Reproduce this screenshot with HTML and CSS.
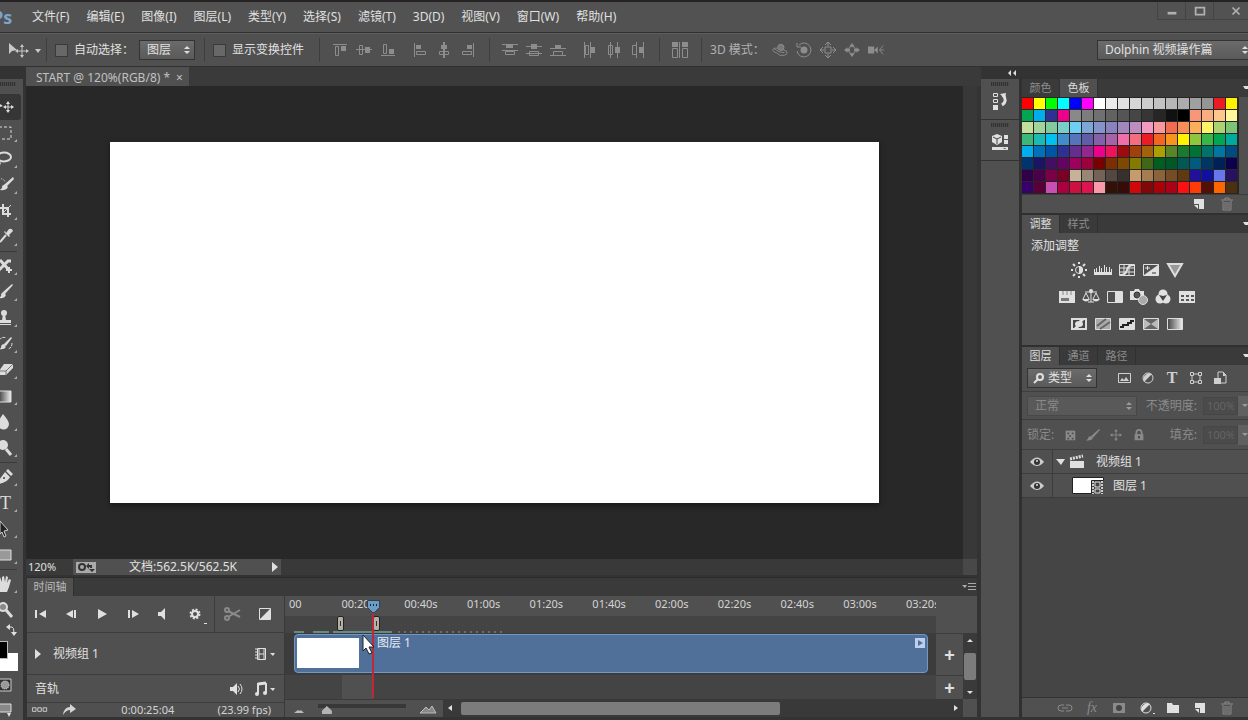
FILE: index.html
```html
<!DOCTYPE html>
<html lang="zh-CN">
<head>
  <meta charset="UTF-8" />
  <meta name="viewport" content="width=device-width, initial-scale=1.0" />
  <title>START @ 120%(RGB/8)</title>
  <link rel="stylesheet" href="styles.css">
</head>
<body>
  <header class="menubar">
    <span class="logo">Ps</span>
    <nav class="menu">
      <button>文件(F)</button>
      <button>编辑(E)</button>
      <button>图像(I)</button>
      <button>图层(L)</button>
      <button>类型(Y)</button>
      <button>选择(S)</button>
      <button>滤镜(T)</button>
      <button>3D(D)</button>
      <button>视图(V)</button>
      <button>窗口(W)</button>
      <button>帮助(H)</button>
    </nav>
    <div class="window-btns">
      <button aria-label="最小化"><svg viewBox="0 0 16 16"><path d="M3 9h10v3H3z"/></svg></button>
      <button aria-label="最大化"><svg viewBox="0 0 16 16"><path d="M3 4h10v8H3z" fill="none" stroke="currentColor" stroke-width="2"/></svg></button>
      <button class="close" aria-label="关闭"><svg viewBox="0 0 16 16"><path d="M4 4l8 8M12 4l-8 8" stroke="currentColor" stroke-width="2"/></svg></button>
    </div>
  </header>

  <div class="options">
    <button class="current-tool" aria-label="移动工具">
      <svg viewBox="0 0 34 16"><path d="M1 1v11l3-3 5-1z"/><path d="M14 4v10M9 9h10" stroke="currentColor"/><path d="M14 2l2 3h-4zM14 16l2-3h-4zM7 9l3-2v4zM21 9l-3-2v4z"/><path d="M27 7h6l-3 4z"/></svg>
    </button>
    <span class="sep"></span>
    <label class="check auto-check"><input type="checkbox">自动选择：</label>
    <div class="dropdown auto-select"><select aria-label="自动选择"><option>图层</option></select></div>
    <span class="sep"></span>
    <label class="check transform-check"><input type="checkbox">显示变换控件</label>
    <span class="sep"></span>
    <div class="icon-set">
      <button aria-label="顶对齐"><svg viewBox="0 0 16 16"><path d="M1 2h14v1H1zM9 4h5v5H9z"/><path d="M3.500 4.500h3v9h-3z" class="line"/></svg></button>
      <button aria-label="垂直居中对齐"><svg viewBox="0 0 16 16"><path d="M0 7h16v1H0zM9 5h5v6H9z"/><path d="M3.500 3.500h3v9h-3z" class="line"/></svg></button>
      <button aria-label="底对齐"><svg viewBox="0 0 16 16"><path d="M1 13h14v1H1zM9 7h5v5H9z"/><path d="M3.500 2.500h3v9h-3z" class="line"/></svg></button>
    </div>
    <div class="icon-set">
      <button aria-label="左对齐"><svg viewBox="0 0 16 16"><path d="M2 1h1v14H2zM4 3h5v4H4z"/><path d="M4.500 9.500h9v3h-9z" class="line"/></svg></button>
      <button aria-label="水平居中对齐"><svg viewBox="0 0 16 16"><path d="M7 0h2v16H7zM5 3h6v4H5z"/><path d="M3.500 9.500h9v3h-9z" class="line"/></svg></button>
      <button aria-label="右对齐"><svg viewBox="0 0 16 16"><path d="M13 1h1v14h-1zM7 3h5v4H7z"/><path d="M2.500 9.500h9v3h-9z" class="line"/></svg></button>
    </div>
    <span class="sep"></span>
    <div class="icon-set">
      <button aria-label="按顶分布"><svg viewBox="0 0 16 16"><path d="M0 2h16v1H0zM4 3h7v3H4zM0 8h16v1H0z"/><path d="M3.500 9.500h9v3h-9z" class="line"/></svg></button>
      <button aria-label="垂直居中分布"><svg viewBox="0 0 16 16"><path d="M0 4h16v1H0zM5 2h6v5H5zM0 11h16v1H0z"/><path d="M3.500 9.500h9v4h-9z" class="line"/></svg></button>
      <button aria-label="按底分布"><svg viewBox="0 0 16 16"><path d="M0 6h16v1H0zM5 3h6v3H5zM0 13h16v1H0z"/><path d="M3.500 9.500h9v4h-9z" class="line"/></svg></button>
    </div>
    <div class="icon-set">
      <button aria-label="按左分布"><svg viewBox="0 0 16 16"><path d="M2 0h1v16H2zM8 0h1v16H8zM9 5h4v6H9z"/><path d="M3.500 3.500h3v9h-3z" class="line"/></svg></button>
      <button aria-label="水平居中分布"><svg viewBox="0 0 16 16"><path d="M4 0h1v16H4zM11 0h1v16h-1zM9 5h5v6H9z"/><path d="M2.500 3.500h4v9h-4z" class="line"/></svg></button>
      <button aria-label="按右分布"><svg viewBox="0 0 16 16"><path d="M6 0h1v16H6zM13 0h1v16h-1zM9 5h4v6H9z"/><path d="M2.500 3.500h4v9h-4z" class="line"/></svg></button>
    </div>
    <span class="sep"></span>
    <div class="icon-set">
      <button aria-label="自动对齐图层"><svg viewBox="0 0 16 16"><path d="M0 0h6v5H0zM10 0h6v5h-6zM7 0h1v16H7z"/><path d="M.500 6.500h5v9h-5zM10.500 6.500h5v9h-5z" class="line"/></svg></button>
    </div>
    <span class="sep"></span>
    <span class="mode-label">3D 模式：</span>
    <div class="icon-set">
      <button aria-label="旋转"><svg viewBox="0 0 18 16"><circle cx="10" cy="5" r="3.500" fill="#777" stroke="currentColor"/><path d="M6 6C0 5-1 10 5 11l4 3h5l3-2-1-3-5-2M2 6l6 4 6 1" class="line"/></svg></button>
      <button aria-label="滚动"><svg viewBox="0 0 16 16"><circle cx="8" cy="8" r="3.500"/><path d="M3 3a7 7 0 1 1-2 6M1 1v4h4" class="line"/></svg></button>
      <button aria-label="拖动"><svg viewBox="0 0 16 16"><path d="M8 1v5M8 10v5M1 8h5M10 8h5M5 3l3-3 3 3M5 13l3 3 3-3M3 5L0 8l3 3M13 5l3 3-3 3M6 4v2H4M10 4v2h2M6 12v-2H4M10 12v-2h2" class="line"/></svg></button>
      <button aria-label="滑动"><svg viewBox="0 0 18 16"><path d="M9 0l3 4H6zM9 16l3-4H6zM0 8l4-3v6zM18 8l-4-3v6z"/><path d="M3 8h12" stroke="currentColor" stroke-width="3"/><circle cx="9" cy="8" r="4" class="line"/><circle cx="9" cy="8" r="2.500" fill="#505050"/></svg></button>
      <button aria-label="缩放"><svg viewBox="0 0 18 16"><path d="M0 4h7v8H0zM7 8l4-4v8z"/><path d="M17 3l-4 5 4 5M13 8h5" class="line"/></svg></button>
    </div>
    <div class="dropdown workspace"><select aria-label="工作区"><option>Dolphin 视频操作篇</option></select></div>
  </div>

  <main class="app">
    <aside class="tools">
      <div class="strip"></div>
      <div class="grip"></div>
      <div class="tool-list">
        <button class="on" aria-label="移动"><svg viewBox="0 0 24 26"><path d="M0 10l3 2-3 1z"/><path d="M8 9v9M4 13h9" stroke="currentColor"/><path d="M8 7l2 3H6zM8 19l2-3H6zM3 13l3-2v4zM14 13l-3-2v4z"/></svg></button>
        <button class="more" aria-label="选框"><svg viewBox="0 0 24 26"><path d="M-1 7h12v12H-1z" class="line" stroke-dasharray="3 2"/></svg></button>
        <button class="more" aria-label="套索"><svg viewBox="0 0 24 26"><ellipse cx="4" cy="11" rx="7" ry="4.500" class="line thick"/><path d="M-1 15q3 2 0 5" class="line"/></svg></button>
        <button class="more" aria-label="快速选择"><svg viewBox="0 0 24 26"><path d="M13 5l1 2-7 7-2-2zM5 12l3 3q-2 4-9 3 4-1 3-4z"/><path d="M-1 8q4-3 6 2" class="line" stroke-dasharray="1 1"/></svg></button>
        <button class="more" aria-label="裁剪"><svg viewBox="0 0 24 26"><path d="M0 10h8v9M3 6v10h8" class="line thick"/><path d="M3 15l8-8" class="line"/></svg></button>
        <button class="more" aria-label="吸管"><svg viewBox="0 0 24 26"><path d="M6 9l3-4q3-1 4 2l-4 4 1 1-1 1-5-5 1-1z"/><path d="M6 11l-6 7" class="line thick"/></svg></button>
        <hr>
        <button class="more" aria-label="修复"><svg viewBox="0 0 24 26"><path d="M-1 17L8 8h3M0 7l9 10" class="line heavy"/><path d="M6 17h6M9 14v6" class="line thick"/></svg></button>
        <button class="more" aria-label="画笔"><svg viewBox="0 0 24 26"><path d="M12 5l1 1-8 9-2-2zM3 13l3 3q-2 4-7 3 3-2 2-4z"/></svg></button>
        <button class="more" aria-label="图章"><svg viewBox="0 0 24 26"><circle cx="4" cy="8" r="3"/><path d="M3 9h2l1 6h5v3H-2v-3h4zM-2 19h13v1H-2z"/></svg></button>
        <button class="more" aria-label="历史记录画笔"><svg viewBox="0 0 24 26"><path d="M11 6l1 1-6 8-3-1zM3 13l3 3q-2 3-7 2 3-1 2-3z"/><path d="M-1 9q4-4 7-2M12 12q0 5-4 6" class="line" stroke-dasharray="3 1"/></svg></button>
        <button class="more" aria-label="橡皮擦"><svg viewBox="0 0 24 26"><path d="M4 7h9v4l-7 7h-7v-4z"/><path d="M-1 14h7l7-7M6 14v4" stroke="#777" fill="none"/></svg></button>
        <button class="more" aria-label="渐变"><svg viewBox="0 0 24 26"><defs><linearGradient id="g1"><stop stop-color="#444"/><stop offset="1" stop-color="#eee"/></linearGradient></defs><path d="M-1 8h12v11H-1z" fill="url(#g1)" stroke="#ddd"/></svg></button>
        <button class="more" aria-label="模糊"><svg viewBox="0 0 24 26"><path d="M3 5q6 7 6 10a5 5 0 0 1-11 0q0-3 5-10"/></svg></button>
        <button class="more" aria-label="减淡"><svg viewBox="0 0 24 26"><circle cx="3" cy="10" r="5"/><path d="M6 14l5 6" class="line heavy"/></svg></button>
        <hr>
        <button class="more" aria-label="钢笔"><svg viewBox="0 0 24 26"><path d="M8 5l5 5-2 2-5-5zM5 8l5 5q-2 5-11 7v-4z"/><circle cx="4" cy="14" r="1" fill="#444"/></svg></button>
        <button class="more letter" aria-label="文字">T</button>
        <button class="more" aria-label="路径选择"><svg viewBox="0 0 24 26"><path d="M0 5l8 9-4 1 2 5-2 1-2-5-2 2z" fill="#222" stroke="#ccc"/></svg></button>
        <button class="more" aria-label="矩形"><svg viewBox="0 0 24 26"><path d="M-1 8h12v10H-1z" fill="#999" stroke="#ddd"/></svg></button>
        <hr>
        <button class="more" aria-label="抓手"><svg viewBox="0 0 24 26"><path d="M-1 13V7l1-1 2 5V6l2-1 1 6 1-6 2 1-1 6 2-4 2 1-2 7-2 5H0l-2-4z"/></svg></button>
        <button aria-label="缩放"><svg viewBox="0 0 24 26"><circle cx="3" cy="10" r="4" fill="#888" stroke="#ddd" stroke-width="2"/><path d="M6 13l6 7" class="line heavy"/></svg></button>
      </div>
      <button class="swap" aria-label="切换颜色"><svg viewBox="0 0 24 14"><path d="M9 4h3q2 0 2 6" class="line"/><path d="M10 1v6L6 4zM11 9h6l-3 4z"/></svg></button>
      <div class="fgbg"><span class="bg"></span><span class="fg"></span></div>
      <button class="mask" aria-label="快速蒙版"><svg viewBox="0 0 24 16"><path d="M-1 2h12v12H-1z" fill="#333" stroke="#ccc"/><circle cx="5" cy="8" r="4" fill="#999" stroke="#ddd" stroke-dasharray="1 1"/></svg></button>
      <button class="mask" aria-label="屏幕模式"><svg viewBox="0 0 24 16"><path d="M-1 3h12v8H-1z" fill="#888" stroke="#ddd"/><path d="M7 12h4l-2 4z"/></svg></button>
    </aside>

    <section class="center">
      <div class="doc-tabs"><div class="doc-tab">START @ 120%(RGB/8) *<button aria-label="关闭">×</button></div></div>
      <div class="stage">
        <div class="pasteboard"><div class="artboard"></div></div>
        <div class="stage-scroll"></div>
      </div>
      <div class="status">
        <input class="zoom-field" value="120%" aria-label="缩放比例">
        <div class="status-info">
          <svg class="bridge" viewBox="0 0 20 12"><path d="M0 1h20v11H0z" fill="#aaa"/><g fill="none" stroke="#333" stroke-width="2"><circle cx="6" cy="6" r="3"/></g><path d="M10 5l3-3v2h3v3h-2V6h-1v2zM19 8l-3 3-3-3z" fill="#333"/></svg>
          <span>文档:562.5K/562.5K</span>
          <button aria-label="更多"><svg viewBox="0 0 10 12"><path d="M2 1l6 5-6 5z"/></svg></button>
        </div>
        <div class="status-scroll"></div>
        <div class="status-corner"></div>
      </div>

      <div class="timeline">
        <div class="tabs"><button class="tab on wide">时间轴</button><button class="panel-menu" aria-label="面板菜单"><svg viewBox="0 0 14 10"><path d="M0 3h5L3 6z"/><path d="M6 1.500h8M6 4.500h8M6 7.500h8" stroke="currentColor"/></svg></button></div>
        <div class="tl-body">
          <div class="tl-left">
            <div class="tl-controls">
              <button aria-label="转到第一帧"><svg viewBox="0 0 16 16"><path d="M2 4h2v8H2zM13 4v8L6 8z"/></svg></button>
              <button aria-label="上一帧"><svg viewBox="0 0 16 16"><path d="M9 4v8L2 8zM10 4h2v8h-2z"/></svg></button>
              <button aria-label="播放"><svg viewBox="0 0 16 16"><path d="M3 3v10l9-5z"/></svg></button>
              <button aria-label="下一帧"><svg viewBox="0 0 16 16"><path d="M2 4h2v8H2zM6 4v8l7-4z"/></svg></button>
              <button aria-label="静音"><svg viewBox="0 0 16 16"><path d="M1 6h3l4-4v12l-4-4H1z"/></svg></button>
              <button class="gear" aria-label="设置"><svg viewBox="0 0 16 20"><circle cx="7" cy="10" r="3" fill="none" stroke="currentColor" stroke-width="2"/><circle cx="7" cy="10" r="4.500" fill="none" stroke="currentColor" stroke-width="2" stroke-dasharray="2 1.530"/><path d="M16 19h3v1h-3z"/></svg></button>
              <div class="cut">
                <button class="off" aria-label="拆分"><svg viewBox="0 0 16 16"><path d="M4 5l12 6M4 11l12-7" stroke="currentColor" stroke-width="2"/><circle cx="3" cy="4" r="2" class="line thick"/><circle cx="3" cy="12" r="2" class="line thick"/></svg></button>
                <button aria-label="过渡"><svg viewBox="0 0 16 16"><path d="M2.500 2.500h11v11h-11z" class="line"/><path d="M13 3v10H3z"/></svg></button>
              </div>
            </div>
            <div class="tl-track">
              <svg class="tri" viewBox="0 0 8 10"><path d="M0 0l6 5-6 5z"/></svg>
              <span>视频组 1</span>
              <button aria-label="视频选项"><svg class="drop" viewBox="0 0 22 16"><path d="M3.500 2.500h8v11h-8z" class="line"/><path d="M5 2v12M10 2v12M5 8h5" class="line"/><path d="M1 3h2M1 6h2M1 9h2M1 12h2" class="line"/><path d="M16 7h5l-2 3z"/></svg></button>
            </div>
            <div class="tl-audio">
              <span>音轨</span>
              <button aria-label="静音音轨"><svg viewBox="0 0 16 16"><path d="M1 6h3l4-4v12l-4-4H1z"/><path d="M9 5q3 3 0 6M11 3q4 5 0 10" class="line"/></svg></button>
              <button aria-label="音轨选项"><svg class="drop" viewBox="0 0 22 16"><path d="M4 3l8-1" class="line heavy"/><path d="M4 2v11M12 2v10" class="line thick"/><circle cx="3" cy="13" r="2"/><circle cx="11" cy="12" r="2"/><path d="M16 7h5l-2 3z"/></svg></button>
            </div>
            <div class="tl-foot">
              <button aria-label="转换为帧动画"><svg viewBox="0 0 18 14"><path d="M.500 4.500h4v4h-4zM6.500 4.500h4v4h-4zM12.500 4.500h4v4h-4z" class="line"/></svg></button>
              <button aria-label="渲染视频"><svg viewBox="0 0 16 14"><path d="M1 12q1-8 7-8V1l6 5-6 4V7q-4 0-7 5"/></svg></button>
              <span class="time">0:00:25:04</span>
              <span>(23.99 fps)</span>
            </div>
          </div>

          <div class="tl-right">
            <div class="tl-main">
              <div class="tl-graph">
                <div class="ruler">
                  <span>00</span><span>00:20s</span><span>00:40s</span><span>01:00s</span><span>01:20s</span><span>01:40s</span><span>02:00s</span><span>02:20s</span><span>02:40s</span><span>03:00s</span><span>03:20s</span>
                </div>
                <div class="work-area"><div class="range"><i></i><i></i></div></div>
                <div class="clip-row">
                  <div class="clip"><div class="thumb"></div><span>图层 1</span><button aria-label="动感"><svg viewBox="0 0 10 10"><path d="M0 0h10v10H0z"/><path d="M3 2l5 3-5 3z" fill="#507099"/></svg></button></div>
                </div>
                <div class="audio-row"><div></div></div>
                <div class="playhead"><svg viewBox="0 0 13 13"><path d="M.500.500h12v7l-5 5h-2l-5-5z" fill="#6c9bc5" stroke="#2b4055"/><path d="M3 5h1M6 5h1M9 5h1" stroke="#16293b" stroke-width="2"/></svg></div>
                <svg class="cursor" viewBox="0 0 13 21"><path d="M1 1v16l3-3 3 6 3-1-3-6h5z" fill="#fff" stroke="#222"/></svg>
              </div>
              <div class="tl-add"><div></div><button aria-label="添加媒体">+</button><button class="short" aria-label="添加音频">+</button></div>
              <div class="tl-scroll">
                <div class="vscroll">
                  <svg viewBox="0 0 10 6"><path d="M2 4l3-3 3 3z"/></svg>
                  <div></div>
                  <svg viewBox="0 0 10 6"><path d="M2 2l3 3 3-3z"/></svg>
                </div>
              </div>
            </div>
            <div class="tl-zoom">
              <div class="zoomer">
                <svg viewBox="0 0 12 10"><path d="M1 9l4-3 2 1 1-1 3 3z"/></svg>
                <input type="range" min="0" max="100" value="5" aria-label="时间轴缩放">
                <svg class="big" viewBox="0 0 18 10"><path d="M1 9l6-6 3 3 3-4 4 7z" fill="#888" stroke="#bbb"/></svg>
              </div>
              <div class="hscroll">
                <svg viewBox="0 0 6 8"><path d="M5 1v6L1 4z"/></svg>
                <div><div class="hthumb"></div></div>
                <svg viewBox="0 0 6 8"><path d="M1 1v6l4-3z"/></svg>
              </div>
              <div class="corner"></div>
            </div>
          </div>
        </div>
      </div>
    </section>

    <aside class="side">
      <div class="strip"><svg viewBox="0 0 8 6"><path d="M3 0v6L0 3zM8 0v6L5 3z"/></svg></div>
      <div class="side-body">
        <div class="dock">
          <div class="dock-item"><div class="grip"></div><button aria-label="历史记录"><svg viewBox="0 0 18 20"><path d="M2.500 2.500h4v3h-4zM2.500 8.500h4v3h-4z" class="line"/><path d="M2 14h5v5H2z"/><path d="M9 3l6-1-1 6z"/><path d="M12 4q5 6-1 10" class="line heavy"/></svg></button></div>
          <div class="dock-item"><div class="grip"></div><button aria-label="属性"><svg viewBox="0 0 18 20"><path d="M6 2l5 2v6l-5 3-5-3V4zM13 3h4v4h-4zM13 8h4v4h-4zM1 15h16v3H1z"/><path d="M2 5l4 2 4-2M6 7v5" stroke="#444" fill="none"/><path d="M12 16h3l-1 1z" fill="#333"/></svg></button></div>
        </div>
        <div class="panels">
          <section>
            <div class="tabs"><button class="tab">颜色</button><button class="tab on">色板</button><button class="panel-menu" aria-label="面板菜单"><svg viewBox="0 0 14 10"><path d="M9 3h5v3h-3z"/></svg></button></div>
            <div class="swatch-wrap"><div class="swatches"></div></div>
            <div class="swatch-foot">
              <button aria-label="新建色板"><svg viewBox="0 0 16 16"><path d="M3 3h10v10H8V8H3zM3 9h4v4z"/></svg></button>
              <button class="off" aria-label="删除色板"><svg viewBox="0 0 16 16"><path d="M2 4h12M6 4V2h4v2M4 5v9h8V5M6 6v7M8 6v7M10 6v7" class="line"/></svg></button>
            </div>
          </section>

          <section>
            <div class="tabs"><button class="tab on">调整</button><button class="tab">样式</button><button class="panel-menu" aria-label="面板菜单"><svg viewBox="0 0 14 10"><path d="M9 3h5v3h-3z"/></svg></button></div>
            <div class="adjust">
              <p>添加调整</p>
              <div class="adjust-row">
                <button aria-label="亮度/对比度"><svg viewBox="0 0 18 18"><circle cx="9" cy="9" r="3.500" class="line"/><path d="M9 5a4 4 0 0 1 0 8z"/><path d="M9 1v2M9 15v2M1 9h2M15 9h2M3 3l2 2M13 13l2 2M15 3l-2 2M3 15l2-2" class="line thick"/></svg></button>
                <button aria-label="色阶"><svg viewBox="0 0 18 18"><path d="M0 14V8h1v3h1V7h1v4h2V5h1v6h1V7h1v4h2V4h1v7h1V6h1v5h2V6h1v5h1V8h1v6z"/></svg></button>
                <button aria-label="曲线"><svg viewBox="0 0 18 18"><path d="M1.500 3.500h15v11h-15zM2 7h14M2 11h14M6 4v10M11 4v10" class="line"/><path d="M2 14q6 0 7-5t7-5" class="line thick"/></svg></button>
                <button aria-label="曝光度"><svg viewBox="0 0 18 18"><path d="M1.500 3.500h15v11h-15z" class="line"/><path d="M16 4v10H2z"/><path d="M3 7h5M5.500 5v4" class="line"/><path d="M10 12h4" stroke="#333"/></svg></button>
                <button aria-label="自然饱和度"><svg viewBox="0 0 18 18"><path d="M2 3h14L9 15z" fill="#999" stroke="#ddd" stroke-width="2"/></svg></button>
              </div>
              <div class="adjust-row">
                <button aria-label="色相/饱和度"><svg viewBox="0 0 18 18"><path d="M1 3h16v12H1z"/><path d="M5 3v4M9 3v4M13 3v4" stroke="#888"/><path d="M3 10h8v3H3z" fill="#777"/></svg></button>
                <button aria-label="色彩平衡"><svg viewBox="0 0 18 18"><path d="M9 2v12M3 4h12M6 14h6M4 5l-3 6M4 5l3 6M14 5l-3 6M14 5l3 6" class="line"/><path d="M0 11h8q-4 5-8 0M10 11h8q-4 5-8 0"/><circle cx="9" cy="3" r="2"/></svg></button>
                <button aria-label="黑白"><svg viewBox="0 0 18 18"><path d="M1.500 3.500h15v11h-15z" class="line"/><path d="M9 4h7v10H9z"/></svg></button>
                <button aria-label="照片滤镜"><svg viewBox="0 0 18 18"><path d="M0 3h4l1-2h4l1 2h4v9H0z"/><circle cx="7" cy="7" r="3" fill="#555" stroke="#333"/><circle cx="13" cy="12" r="4.500" fill="#aaa" stroke="#ddd"/></svg></button>
                <button aria-label="通道混合器"><svg viewBox="0 0 18 18"><circle cx="9" cy="6" r="4.500"/><circle cx="6" cy="11" r="4.500"/><circle cx="12" cy="11" r="4.500"/><path d="M5 7l4 1 4-1-4 6z" fill="#444"/></svg></button>
                <button aria-label="颜色查找"><svg viewBox="0 0 18 18"><path d="M1 3h16v12H1z"/><path d="M3 7h3v2H3zM8 7h3v2H8zM13 7h3v2h-3zM8 11h3v2H8zM13 11h3v2h-3zM3 11h3v2H3z" fill="#555"/></svg></button>
              </div>
              <div class="adjust-row">
                <button aria-label="反相"><svg viewBox="0 0 18 18"><path d="M2 4h14v10H2z" fill="#444" stroke="#ddd" stroke-width="2"/><ellipse cx="9" cy="9" rx="4" ry="3"/><path d="M3 14l4-4 2 3zM15 4l-4 4-2-3z"/></svg></button>
                <button aria-label="色调分离"><svg viewBox="0 0 18 18"><path d="M1.500 3.500h15v11h-15z" fill="#aaa" stroke="#ddd"/><path d="M3 11L12 4M6 14l10-7" stroke="#666" stroke-width="2" fill="none"/></svg></button>
                <button aria-label="阈值"><svg viewBox="0 0 18 18"><path d="M1.500 3.500h15v11h-15z" fill="#ddd" stroke="#ddd"/><path d="M2 12h3v-2h5V8h3V6h3" stroke="#222" stroke-width="2" fill="none"/></svg></button>
                <button aria-label="可选颜色"><svg viewBox="0 0 18 18"><path d="M1.500 3.500h15v11h-15z" fill="#666" stroke="#ddd"/><path d="M2 4l7 5-7 5zM16 4L9 9l7 5z" fill="#bbb"/></svg></button>
                <button aria-label="渐变映射"><svg viewBox="0 0 18 18"><path d="M1.500 3.500h15v11h-15z" fill="url(#g1)" stroke="#ddd"/></svg></button>
              </div>
            </div>
          </section>

          <section class="layers">
            <div class="tabs"><button class="tab on">图层</button><button class="tab">通道</button><button class="tab">路径</button><button class="panel-menu" aria-label="面板菜单"><svg viewBox="0 0 14 10"><path d="M9 3h5v3h-3z"/></svg></button></div>
            <div class="row filter-row">
              <div class="dropdown filter"><svg viewBox="0 0 12 12"><circle cx="7" cy="5" r="3" class="line thick"/><path d="M5 7l-4 4" class="line thick"/></svg><select aria-label="图层过滤"><option>类型</option></select></div>
              <div class="icon-set filters">
                <button aria-label="像素"><svg viewBox="0 0 16 16"><path d="M2.500 3.500h12v9h-12z" class="line"/><path d="M4 11l2-3 2 2 2-3 3 4z"/></svg></button>
                <button aria-label="调整"><svg viewBox="0 0 16 16"><circle cx="8" cy="8" r="5" class="line"/><path d="M12 4A6 6 0 0 0 4 12z"/></svg></button>
                <button class="letter" aria-label="文字">T</button>
                <button aria-label="形状"><svg viewBox="0 0 16 16"><path d="M4 4h8v8H4z" class="line"/><path d="M2.500 2.500h3v3h-3zM10.500 2.500h3v3h-3zM2.500 10.500h3v3h-3zM10.500 10.500h3v3h-3z" fill="#505050" stroke="currentColor"/></svg></button>
                <button aria-label="智能对象"><svg viewBox="0 0 16 16"><path d="M6 8V2h5l3 3v8H9" class="line"/><path d="M2 8h7v6H2zM11 2v4h3z"/></svg></button>
              </div>
            </div>
            <div class="row faded">
              <div class="dropdown blend"><select aria-label="混合模式"><option>正常</option></select></div>
              <label for="opacity">不透明度:</label>
              <input id="opacity" value="100%"><button class="stepper" aria-label="不透明度滑块"></button>
            </div>
            <div class="row faded lock-row">
              <span>锁定:</span>
              <button aria-label="锁定透明像素"><svg viewBox="0 0 16 16"><path d="M3 3h11v11H3z"/><path d="M5 5h2v2H5zM10 5h2v2h-2zM7 8h2v2H7zM5 11h2v2H5zM10 11h2v2h-2z" fill="#505050"/></svg></button>
              <button aria-label="锁定图像像素"><svg viewBox="0 0 16 16"><path d="M15 1l1 1-8 9-2-2zM6 9l2 3q-3 3-8 2 3-1 3-4z"/></svg></button>
              <button aria-label="锁定位置"><svg viewBox="0 0 16 16"><path d="M8 3v10M3 8h10" class="line"/><path d="M8 1l2 3H6zM8 15l2-3H6zM1 8l3-2v4zM15 8l-3-2v4z"/></svg></button>
              <button aria-label="锁定全部"><svg viewBox="0 0 16 16"><path d="M3 7h10v7H3z"/><path d="M5 7V5q0-3 3-3t3 3v2" class="line thick"/><path d="M8 9v3" stroke="#444" stroke-width="2"/></svg></button>
              <label for="fill">填充:</label>
              <input id="fill" value="100%"><button class="stepper" aria-label="填充滑块"></button>
            </div>
            <ul class="layer-list">
              <li>
                <button class="eye" aria-label="可见性"><svg viewBox="0 0 14 10"><path d="M0 5q7-9 14 0-7 8-14 0z" fill="#ccc"/><circle cx="7" cy="5" r="3" fill="#333"/><circle cx="7" cy="4" r="1"/></svg></button>
                <svg class="tri-down" viewBox="0 0 10 10"><path d="M0 2h9L5 8z"/></svg>
                <svg class="group" viewBox="0 0 16 16"><path d="M1 7h14v7H1z"/><path d="M1 5l13-3" stroke="#ddd" stroke-width="3" stroke-dasharray="2 1"/></svg>
                <span>视频组 1</span>
              </li>
              <li>
                <button class="eye" aria-label="可见性"><svg viewBox="0 0 14 10"><path d="M0 5q7-9 14 0-7 8-14 0z" fill="#ccc"/><circle cx="7" cy="5" r="3" fill="#333"/><circle cx="7" cy="4" r="1"/></svg></button>
                <svg class="layer-thumb" viewBox="0 0 32 18"><path d="M.500.500h31v3h-12v13h-19z" fill="#fff" stroke="#222"/><path d="M20 4h11v13H20z" fill="#444"/><path d="M23 5h5v5h-5zM23 12h5v4h-5z" class="line"/><path d="M21 4v13M30 4v13" stroke="#ccc" stroke-width="2" stroke-dasharray="2 1"/></svg>
                <span>图层 1</span>
              </li>
            </ul>
            <div class="layer-foot">
              <button class="off" aria-label="链接"><svg viewBox="0 0 16 16"><path d="M7 5H4q-3 0-3 3t3 3h3M9 5h3q3 0 3 3t-3 3H9M5 8h6" class="line"/></svg></button>
              <button class="off fx" aria-label="样式">fx</button>
              <button class="off" aria-label="蒙版"><svg viewBox="0 0 16 16"><path d="M2 3h12v10H2z"/><circle cx="8" cy="8" r="3" fill="#444"/></svg></button>
              <button aria-label="调整图层"><svg viewBox="0 0 16 16"><circle cx="8" cy="8" r="5" class="line"/><path d="M12 4A6 6 0 0 0 4 12zM15 13h2v1h-2z"/></svg></button>
              <button aria-label="新建组"><svg viewBox="0 0 16 16"><path d="M2 3h5l1 2h6v8H2z"/></svg></button>
              <button aria-label="新建图层"><svg viewBox="0 0 16 16"><path d="M3 3h10v10H8V8H3zM3 9h4v4z"/></svg></button>
              <button class="off" aria-label="删除图层"><svg viewBox="0 0 16 16"><path d="M2 4h12M6 4V2h4v2M4 5v9h8V5M6 6v7M8 6v7M10 6v7" class="line"/></svg></button>
            </div>
          </section>
        </div>
      </div>
    </aside>
  </main>
  <script src="script.js"></script>
</body>
</html>
```
FILE: styles.css
```css
* {
  box-sizing: border-box;
}
body {
  margin: 0;
  height: 100vh;
  display: flex;
  flex-direction: column;
  overflow: hidden;
  background: #505050;
  color: #e0e0e0;
  font: 12px/16px "Noto Sans", "Noto Sans CJK SC", sans-serif;
}
button {
  display: flex;
  align-items: center;
  justify-content: center;
  padding: 0;
  border: 0;
  background: none;
  color: inherit;
  font: inherit;
  white-space: nowrap;
}
input, select {
  font: inherit;
  color: inherit;
}
svg {
  display: block;
  flex: none;
  width: 16px;
  height: 16px;
  fill: currentColor;
  overflow: visible;
}
svg .line {
  fill: none;
  stroke: currentColor;
}
svg .thick {
  stroke-width: 2;
}
svg .heavy {
  stroke-width: 3;
}
.off {
  color: #8a8a8a;
}
.letter {
  font: bold 16px/16px "Liberation Serif", serif;
}
.grip {
  flex: none;
  width: 18px;
  height: 4px;
  background: repeating-linear-gradient(90deg, #333 0 1px, #484848 1px 2px);
}
.strip {
  height: 12px;
  flex: none;
  background: #333;
}

/* menu bar */
.menubar {
  flex: none;
  height: 33px;
  display: flex;
  align-items: center;
  background: #525252;
  border-top: 2px solid #262122;
  border-bottom: 1px solid #303030;
}
.logo {
  width: 32px;
  margin-left: -8px;
  color: #7ba3cc;
  font: bold 18px/20px "Open Sans", sans-serif;
}
.menu {
  display: flex;
  gap: 17px;
  margin-left: 8px;
}
.window-btns {
  display: flex;
  align-self: flex-start;
  margin-left: auto;
  color: #b0b0b0;
}
.window-btns button {
  width: 28px;
  height: 18px;
  border: solid #444;
  border-width: 0 0 1px 1px;
}
.window-btns svg {
  width: 14px;
  height: 14px;
}
.window-btns .close {
  width: 35px;
  padding-left: 10px;
}

/* options bar */
.options {
  flex: none;
  height: 34px;
  display: flex;
  align-items: center;
  padding-left: 8px;
  background: #505050;
  border-top: 1px solid #5e5e5e;
  border-bottom: 1px solid #303030;
}
.current-tool svg {
  width: 34px;
}
.current-tool {
  margin-right: -5px;
  color: #c8c8c8;
}
.sep {
  width: 1px;
  height: 24px;
  margin: 0 8px 0 9px;
  background: #3e3e3e;
}
.check {
  display: flex;
  align-items: center;
  gap: 6px;
  white-space: nowrap;
}
.check input {
  appearance: none;
  width: 13px;
  height: 13px;
  margin: 0;
  background: #686868;
  border: 1px solid #3a3a3a;
}
.auto-check {
  padding-right: 5px;
}
.transform-check {
  padding-right: 6px;
}
.dropdown {
  position: relative;
  display: flex;
  align-items: center;
  height: 20px;
  background: linear-gradient(#6b6b6b, #5a5a5a);
  border: 1px solid #333;
}
.dropdown select {
  appearance: none;
  flex: 1;
  width: 100%;
  height: 18px;
  padding: 0 7px;
  border: 0;
  background: none;
}
.dropdown::before, .dropdown::after {
  content: "";
  position: absolute;
  right: 4px;
  border: 3px solid transparent;
}
.dropdown::before {
  top: 2px;
  border-bottom-color: #ddd;
}
.dropdown::after {
  bottom: 2px;
  border-top-color: #ddd;
}
.auto-select {
  width: 56px;
}
.icon-set {
  display: flex;
  color: #8d8d8d;
}
.icon-set + .icon-set {
  margin-left: 8px;
}
.icon-set button {
  width: 24px;
  height: 24px;
}
.mode-label {
  width: 58px;
  color: #b0b0b0;
  white-space: nowrap;
}
.workspace {
  width: 156px;
  margin-left: auto;
  margin-right: -5px;
}

/* main frame */
.app {
  flex: 1;
  min-height: 0;
  display: flex;
}
.tools {
  flex: none;
  width: 26px;
  display: flex;
  flex-direction: column;
  overflow: hidden;
  border-right: 3px solid #333;
}
.tools .strip {
  margin-right: -3px;
}
.tools .grip {
  margin-top: 3px;
  margin-bottom: 8px;
  width: 16px;
}
.tool-list {
  flex: none;
  color: #dcdcdc;
}
.tool-list hr {
  height: 1px;
  margin: 1px 6px 1px 0;
  border: 0;
  background: #3a3a3a;
}
.tool-list button {
  position: relative;
  width: 21px;
  height: 26px;
  justify-content: flex-start;
}
.tool-list svg {
  width: 24px;
  height: 26px;
}
.tool-list .on {
  background: #363636;
  border-radius: 0 3px 3px 0;
}
.tool-list .more::after {
  content: "";
  position: absolute;
  right: 4px;
  bottom: 4px;
  border: solid transparent;
  border-width: 3px 0 0 3px;
  border-right: 3px solid #aaa;
}
.tool-list .letter {
  font-size: 18px;
  font-weight: normal;
}
.swap svg {
  width: 24px;
  height: 14px;
}
.fgbg {
  position: relative;
  flex: none;
  height: 30px;
  margin: 4px 0 6px;
}
.fgbg span {
  position: absolute;
}
.fgbg .bg {
  right: 5px;
  bottom: 0;
  width: 18px;
  height: 18px;
  background: #fff;
}
.fgbg .fg {
  left: -9px;
  top: 0;
  width: 17px;
  height: 18px;
  background: #000;
  border: 1px solid #bbb;
}
.mask {
  flex: none;
  margin-bottom: 8px;
}
.mask svg {
  width: 24px;
}

.center {
  flex: 1;
  min-width: 0;
  display: flex;
  flex-direction: column;
  background: #333;
}
.doc-tabs {
  flex: none;
  height: 19px;
  display: flex;
  background: #3a3a3a;
}
.doc-tab {
  display: flex;
  gap: 6px;
  align-items: center;
  padding: 2px 6px 0 10px;
  background: #505050;
  color: #c0c0c0;
}
.stage {
  flex: 1;
  min-height: 0;
  display: flex;
}
.pasteboard {
  flex: 1;
  display: flex;
  align-items: center;
  justify-content: center;
  background: #282828;
}
.artboard {
  width: 82%;
  aspect-ratio: 32 / 15;
  background: #fff;
  box-shadow: 0 2px 5px #181818;
}
.stage-scroll {
  width: 14px;
  margin-right: 4px;
  background: #383838;
}
.status {
  flex: none;
  height: 16px;
  display: flex;
  margin-right: 4px;
  background: #505050;
}
.zoom-field {
  width: 47px;
  padding: 0 2px;
  border: 0;
  background: #3a3a3a;
  font-size: 11px;
}
.status-info {
  width: 208px;
  display: flex;
  align-items: center;
  justify-content: space-between;
  padding: 0 1px 0 3px;
}
.bridge {
  width: 20px;
  height: 12px;
}
.status-info button svg {
  width: 10px;
  height: 12px;
}
.status-scroll {
  flex: 1;
  background: #393939;
}
.status-corner {
  width: 14px;
  background: #484848;
}

/* shared panel tabs */
.tabs {
  flex: none;
  height: 18px;
  display: flex;
  background: #3a3a3a;
}
.tab {
  width: 38px;
  border-right: 1px solid #303030;
  color: #8c8c8c;
  font-size: 11px;
}
.tab.on {
  background: #505050;
  color: #dcdcdc;
}
.tab.wide {
  width: 47px;
  color: #bbb;
}
.panel-menu {
  margin-left: auto;
}
.panel-menu svg {
  width: 14px;
  height: 10px;
}

/* timeline */
.timeline {
  flex: none;
  margin: 2px 4px 3px 1px;
  border-top: 1px solid #2c2c2c;
}
.timeline .panel-menu {
  margin-right: 1px;
  color: #aaa;
}
.tl-body {
  display: flex;
  height: 121px;
  background: #505050;
}
.tl-left {
  flex: none;
  width: 258px;
  display: flex;
  flex-direction: column;
  border-right: 1px solid #3a3a3a;
}
.tl-left > div {
  display: flex;
  align-items: center;
  border-bottom: 1px solid #3c3c3c;
}
.tl-controls {
  height: 37px;
  gap: 15px;
  padding-left: 6px;
}
.tl-controls .gear svg {
  height: 20px;
}
.tl-controls .cut {
  display: flex;
  gap: 17px;
  align-self: stretch;
  margin-left: -5px;
  padding-left: 9px;
  border-left: 1px solid #3c3c3c;
}
.tl-track {
  height: 42px;
  padding: 0 8px;
}
.tl-track span {
  margin-left: 10px;
}
.tl-track button {
  margin-left: auto;
}
.tri {
  width: 8px;
  height: 10px;
}
.drop {
  width: 22px;
}
.tl-audio {
  height: 28px;
  gap: 9px;
  padding: 0 8px;
}
.tl-audio span {
  flex: 1;
}
.tl-left .tl-foot {
  height: 14px;
  gap: 14px;
  padding: 0 13px 0 5px;
  border-bottom: 0;
  color: #d4d4d4;
  font-size: 11px;
}
.tl-foot svg {
  height: 14px;
}
.tl-foot .time {
  flex: 1;
  text-align: center;
}
.tl-right {
  flex: 1;
  min-width: 0;
  display: flex;
  flex-direction: column;
}
.tl-main {
  flex: 1;
  display: flex;
}
.tl-graph {
  position: relative;
  flex: 1;
  min-width: 0;
  overflow: hidden;
  background: #444;
}
.ruler {
  display: flex;
  height: 20px;
  margin: 0 -18px 0 -21px;
  background: #505050;
  color: #d4d4d4;
  font-size: 11px;
}
.ruler span {
  flex: 1;
  text-align: center;
}
.work-area {
  height: 17px;
  padding-left: 52px;
  background:
    linear-gradient(#648c84, #648c84) 9px 15px / 10px 2px no-repeat,
    linear-gradient(#648c84, #648c84) 28px 15px / 16px 2px no-repeat,
    linear-gradient(#648c84, #648c84) 48px 15px / 59px 2px no-repeat,
    repeating-linear-gradient(90deg, #6c6c6c 0 2px, #444 2px 6px) 113px 15px / 106px 2px no-repeat;
}
.range {
  display: flex;
  justify-content: space-between;
  width: 43px;
  height: 15px;
  background: #4c4c4c;
}
.range i {
  width: 7px;
  border: 1px solid #222;
  border-radius: 2px;
  background: linear-gradient(#333, #333) center / 1px 5px no-repeat #b4b0a8;
}
.clip-row {
  height: 42px;
  padding: 1px 8px 1px 9px;
  background: #3c3c3c;
}
.clip {
  display: flex;
  gap: 18px;
  height: 39px;
  padding: 3px 2px;
  background: #507099;
  border: 1px solid #7497c4;
  border-radius: 4px;
  color: #e4ecf5;
}
.clip .thumb {
  width: 62px;
  height: 30px;
  background: #fff;
}
.clip span {
  margin-top: -3px;
}
.clip button {
  align-self: flex-start;
  margin-left: auto;
  color: #bcd0ee;
}
.clip svg {
  width: 10px;
  height: 10px;
}
.audio-row {
  height: 24px;
  padding-left: 57px;
}
.audio-row div {
  width: 31px;
  height: 100%;
  background: #505050;
}
.playhead {
  position: absolute;
  left: 82px;
  top: 4px;
  bottom: 1px;
  width: 13px;
}
.playhead::after {
  content: "";
  position: absolute;
  left: 5px;
  top: 13px;
  bottom: 0;
  width: 2px;
  background: #c0283a;
}
.playhead svg {
  width: 13px;
  height: 13px;
}
.cursor {
  position: absolute;
  left: 77px;
  top: 38px;
  width: 13px;
  height: 21px;
}
.tl-add {
  width: 27px;
  background: #505050;
}
.tl-add div {
  height: 37px;
}
.tl-add button {
  width: 100%;
  height: 42px;
  border-top: 1px solid #3c3c3c;
  font: bold 18px/18px "Liberation Sans", sans-serif;
}
.tl-add .short {
  height: 24px;
}
.tl-scroll {
  width: 14px;
  padding-top: 37px;
}
.vscroll {
  height: 66px;
  display: flex;
  flex-direction: column;
  align-items: center;
  justify-content: space-between;
  padding: 5px 0 4px;
  background: #3a3a3a;
}
.vscroll svg {
  width: 10px;
  height: 6px;
}
.vscroll div {
  width: 12px;
  height: 27px;
  background: #7c7c7c;
  border-radius: 2px;
}
.tl-zoom {
  flex: none;
  display: flex;
  height: 18px;
}
.zoomer {
  width: 158px;
  display: flex;
  align-items: center;
  justify-content: space-between;
  padding: 0 6px 0 8px;
  border-top: 1px solid #3a3a3a;
  color: #bbb;
}
.zoomer svg {
  width: 12px;
  height: 10px;
}
.zoomer .big {
  width: 18px;
}
.zoomer input {
  appearance: none;
  width: 88px;
  height: 14px;
  margin: 0;
  background: linear-gradient(#383838, #383838) 0 2px / 100% 4px no-repeat;
}
.zoomer input::-webkit-slider-thumb {
  appearance: none;
  width: 10px;
  height: 8px;
  margin-top: 3px;
  background: #b4b4b4;
  clip-path: polygon(50% 0, 100% 60%, 100% 100%, 0 100%, 0 60%);
}
.hscroll {
  flex: 1;
  display: flex;
  align-items: center;
  gap: 8px;
  padding: 0 4px;
  background: #393939;
}
.hscroll svg {
  width: 6px;
  height: 8px;
}
.hscroll > div {
  flex: 1;
}
.hthumb {
  width: 66%;
  height: 13px;
  background: #7c7c7c;
  border-radius: 2px;
}
.corner {
  width: 14px;
}

/* right side */
.side {
  flex: none;
  width: 267px;
  display: flex;
  flex-direction: column;
  border-bottom: 3px solid #333;
}
.side .strip svg {
  width: 8px;
  height: 6px;
  margin: 3px 0 0 27px;
}
.side-body {
  flex: 1;
  min-height: 0;
  display: flex;
}
.dock {
  width: 40px;
  border-right: 2px solid #303030;
}
.dock-item {
  display: flex;
  flex-direction: column;
  align-items: center;
  height: 41px;
  padding-top: 3px;
  gap: 5px;
  border-bottom: 1px solid #333;
}
.dock-item svg {
  width: 18px;
  height: 20px;
}
.panels {
  flex: 1;
  display: flex;
  flex-direction: column;
  gap: 2px;
  padding-left: 1px;
  background: #303030;
}
.panels section {
  background: #505050;
}
.swatch-wrap {
  height: 97px;
  background: #505050;
}
.swatches {
  display: grid;
  grid-template-columns: repeat(18, 11px);
  grid-auto-rows: 11px;
  gap: 1px;
  width: 217px;
  padding: 1px 1px 1px 0;
  background: #262626;
}
.swatch-foot {
  display: flex;
  justify-content: flex-end;
  align-items: center;
  gap: 12px;
  height: 19px;
  padding-right: 13px;
  border-top: 1px solid #3c3c3c;
}
.adjust {
  height: 112px;
  padding: 5px 14px 0 9px;
}
.adjust p {
  margin: 0 0 7px;
}
.adjust-row {
  display: flex;
  justify-content: center;
  gap: 6px;
  height: 18px;
  margin-bottom: 9px;
  padding-right: 12px;
}
.adjust svg {
  width: 18px;
  height: 18px;
}
.layers {
  flex: 1;
  min-height: 0;
  display: flex;
  flex-direction: column;
}
.row {
  flex: none;
  display: flex;
  align-items: center;
  height: 28px;
  padding-left: 5px;
  border-bottom: 1px solid #3e3e3e;
}
.filter-row {
  height: 27px;
}
.filter {
  width: 70px;
}
.filter svg {
  width: 12px;
  height: 12px;
  margin-left: 5px;
}
.filter select {
  padding: 0 3px;
}
.filters {
  margin-left: 15px;
  color: #d0d0d0;
}
.faded {
  color: #8a8a8a;
}
.faded label {
  margin-left: auto;
  margin-right: 6px;
}
.faded input {
  width: 35px;
  height: 18px;
  padding: 0 3px;
  border: 1px solid #464646;
  background: #4b4b4b;
  color: #646464;
  font-size: 11px;
}
.blend {
  width: 110px;
  background: #595959;
  border-color: #484848;
}
.faded .dropdown::before, .faded .dropdown::after {
  opacity: .5;
}
.stepper {
  flex: none;
  width: 10px;
  height: 20px;
  background: #606060;
}
.stepper::after {
  content: "";
  margin: 3px 0 0 4px;
  border: 3px solid transparent;
  border-top-color: #999;
}
.lock-row {
  height: 30px;
}
.lock-row button:not(.stepper) {
  margin-left: 9px;
}
.lock-row svg {
  width: 14px;
  height: 14px;
}
.layer-list {
  flex: 1;
  margin: 0;
  padding: 0;
  list-style: none;
  background: #454545;
}
.layer-list li {
  display: flex;
  align-items: center;
  height: 24px;
  background: #505050;
  border-bottom: 1px solid #3c3c3c;
}
.eye {
  width: 31px;
  height: 100%;
  border-right: 1px solid #3c3c3c;
}
.eye svg {
  width: 14px;
  height: 10px;
}
.tri-down {
  width: 10px;
  height: 10px;
  margin: 0 3px;
}
.group {
  margin-right: 11px;
}
.layer-thumb {
  width: 32px;
  height: 18px;
  margin: 0 9px 0 19px;
}
.layer-foot {
  flex: none;
  display: flex;
  align-items: center;
  justify-content: flex-end;
  gap: 11px;
  height: 20px;
  padding-right: 13px;
  border-top: 1px solid #333;
}
.layer-foot .fx {
  width: 16px;
  font: italic 14px/16px "Liberation Serif", serif;
}
```
FILE: script.js
```js
// default swatch library, one string per row
const rows = [
  'ff0000 ffff00 00ff00 00ffff 0000ff ff00ff ffffff ebebeb e1e1e1 d7d7d7 cccccc c2c2c2 b7b7b7 acacac a0a0a0 959595 ed1c24 fff200',
  '00a651 00aeef 2e3192 ec008c 898989 7d7d7d 707070 626262 555555 464646 363636 262626 111111 000000 f7977a f9ad81 fdc68a fff79a',
  'c4df9b a2d39c 82ca9d 7bcdc8 6ecff6 7ea7d8 8493ca 8882be a187be bc8dbf f49ac2 f6989d f26c4f f68e55 fbaf5c fff467 acd372 7cc576',
  '3bb878 1abbb4 00bff3 438cca 5574b9 605ca8 855fa8 a763a8 f06ea9 f26d7d ed1c24 f26522 f7941d fff200 8dc73f 39b54a 00a651 00a99d',
  '00aeef 0072bc 0054a6 2e3192 662d91 92278f ec008c ed145b 9e0b0f a0410d a36209 aba000 598527 1a7b30 007236 00746b 0076a3 004b80',
  '003471 1b1464 440e62 630460 9e005d 9e0039 790000 7b2e00 7d4900 827b00 406618 005e20 005826 005952 005b7f 003663 002157 0d004c',
  '32004b 4b0049 7b0046 7a0026 c7b299 998675 736357 534741 37302d c69c6d a67c52 8c6239 754c24 603913 20109a 1010a0 6677ee 2a1060',
  '38006b 5a0038 c850b0 aa0040 cc1040 dc1450 f89aaa 331008 350c08 d00808 800808 aa0008 aa0018 ff1010 ff3c08 551005 ff6600 4c3010'
];
const box = document.querySelector('.swatches');
rows.join(' ').split(' ').forEach((hex) => {
  const cell = document.createElement('div');
  cell.style.background = '#' + hex;
  box.appendChild(cell);
});
```
